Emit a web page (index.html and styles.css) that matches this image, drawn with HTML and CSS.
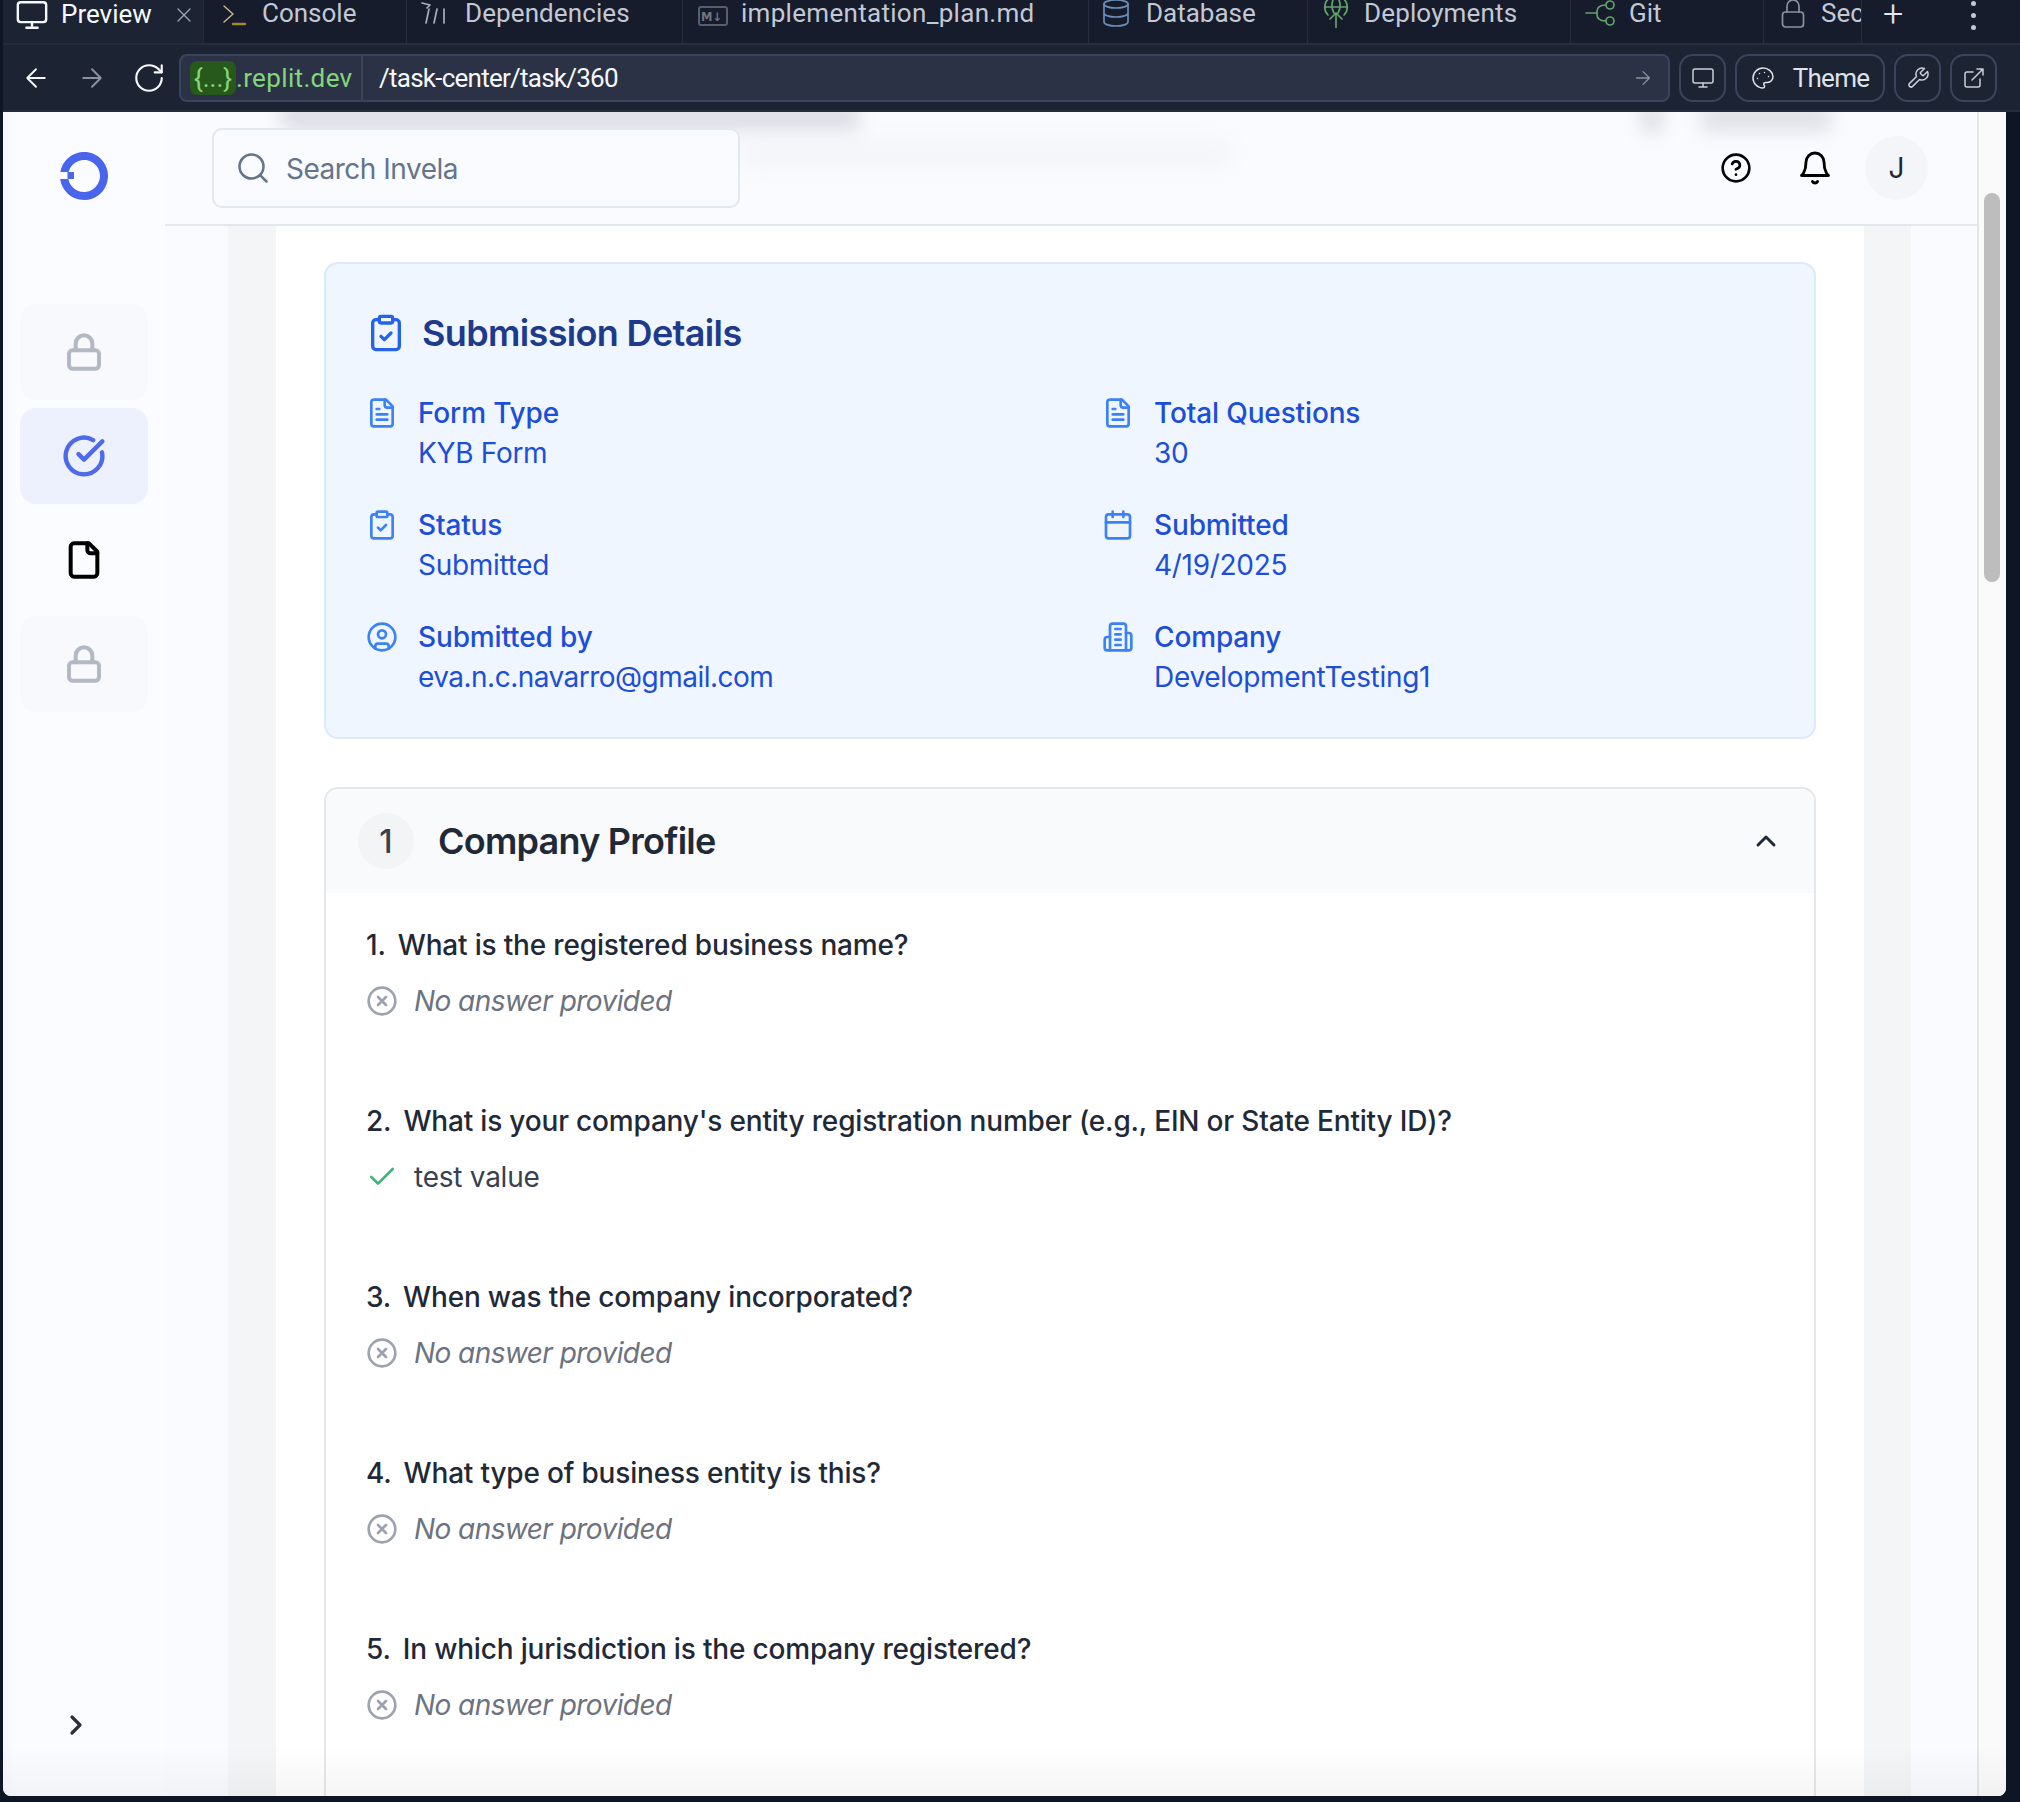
FILE: index.html
```html
<!DOCTYPE html>
<html lang="en">
<head>
<meta charset="utf-8">
<title>Replit preview</title>
<link rel="stylesheet" href="styles.css">
</head>
<body>
<svg class="defs" aria-hidden="true">
  <symbol id="i-monitor" viewBox="0 0 24 24"><rect x="2" y="3" width="20" height="14" rx="2"/><path d="M8 21h8M12 17v4"/></symbol>
  <symbol id="i-x" viewBox="0 0 24 24"><path d="M18 6 6 18M6 6l12 12"/></symbol>
  <symbol id="i-arrow-left" viewBox="0 0 24 24"><path d="m12 19-7-7 7-7M19 12H5"/></symbol>
  <symbol id="i-arrow-right" viewBox="0 0 24 24"><path d="M5 12h14M12 5l7 7-7 7"/></symbol>
  <symbol id="i-reload" viewBox="0 0 24 24"><path d="M21 12a9 9 0 1 1-9-9c2.520 0 4.930 1 6.740 2.740L21 8"/><path d="M21 3v5h-5"/></symbol>
  <symbol id="i-lock" viewBox="0 0 24 24"><rect x="3" y="11" width="18" height="11" rx="2"/><path d="M7 11V7a5 5 0 0 1 10 0v4"/></symbol>
  <symbol id="i-check-circle" viewBox="0 0 24 24"><path d="M21.801 10A10 10 0 1 1 17 3.335"/><path d="m9 11 3 3L22 4"/></symbol>
  <symbol id="i-file" viewBox="0 0 24 24"><path d="M15 2H6a2 2 0 0 0-2 2v16a2 2 0 0 0 2 2h12a2 2 0 0 0 2-2V7Z"/><path d="M14 2v4a2 2 0 0 0 2 2h4"/></symbol>
  <symbol id="i-file-text" viewBox="0 0 24 24"><path d="M15 2H6a2 2 0 0 0-2 2v16a2 2 0 0 0 2 2h12a2 2 0 0 0 2-2V7Z"/><path d="M14 2v4a2 2 0 0 0 2 2h4M10 9H8M16 13H8M16 17H8"/></symbol>
  <symbol id="i-clipboard" viewBox="0 0 24 24"><rect x="8" y="2" width="8" height="4" rx="1"/><path d="M16 4h2a2 2 0 0 1 2 2v14a2 2 0 0 1-2 2H6a2 2 0 0 1-2-2V6a2 2 0 0 1 2-2h2"/><path d="m9 14 2 2 4-4"/></symbol>
  <symbol id="i-calendar" viewBox="0 0 24 24"><path d="M8 2v4M16 2v4"/><rect x="3" y="4" width="18" height="18" rx="2"/><path d="M3 10h18"/></symbol>
  <symbol id="i-user" viewBox="0 0 24 24"><circle cx="12" cy="12" r="10"/><circle cx="12" cy="10" r="3"/><path d="M7 20.662V19a2 2 0 0 1 2-2h6a2 2 0 0 1 2 2v1.662"/></symbol>
  <symbol id="i-building" viewBox="0 0 24 24"><path d="M6 22V4a2 2 0 0 1 2-2h8a2 2 0 0 1 2 2v18Z"/><path d="M6 12H4a2 2 0 0 0-2 2v6a2 2 0 0 0 2 2h2M18 9h2a2 2 0 0 1 2 2v9a2 2 0 0 1-2 2h-2M10 6h4M10 10h4M10 14h4M10 18h4"/></symbol>
  <symbol id="i-circle-x" viewBox="0 0 24 24"><circle cx="12" cy="12" r="10"/><path d="m15 9-6 6M9 9l6 6"/></symbol>
</svg>

<div class="window">
  <nav class="tabbar">
    <div class="tab tab-preview is-active">
      <svg class="ico ico-tab ink-white"><use href="#i-monitor"/></svg><span class="tab-label">Preview</span>
      <svg class="ico ico-close"><use href="#i-x"/></svg>
    </div>
    <div class="tab tab-console">
      <svg class="ico-tab" viewBox="0 0 28 28"><path class="stroke-tan" d="M4 6l9 8-9 8"/><path class="stroke-olive" d="M13 24h12"/></svg><span class="tab-label">Console</span>
    </div>
    <div class="tab tab-deps">
      <svg class="ico ico-tab ink-deps" viewBox="-3 0 28 28"><path d="M-2 3l8 2-3 3"/><path d="M5 9 2 23M13 9l-3 14M20 9v14"/></svg><span class="tab-label">Dependencies</span>
    </div>
    <div class="tab tab-plan">
      <svg class="ico-tab ico-md" viewBox="0 0 30 20"><rect class="stroke-dim" x="1" y="1" width="28" height="18" rx="2"/><text class="md-mark" x="3" y="14.500">M↓</text></svg><span class="tab-label">implementation_plan.md</span>
    </div>
    <div class="tab tab-db">
      <svg class="ico ico-tab ink-blue"><ellipse cx="14" cy="4" rx="12" ry="4"/><path d="M2 4v18c0 2.200 5.400 4 12 4s12-1.800 12-4V4M2 13c0 2.200 5.400 4 12 4s12-1.800 12-4"/></svg><span class="tab-label">Database</span>
    </div>
    <div class="tab tab-deploy">
      <svg class="ico ico-tab ink-green" viewBox="0 0 24 28"><path d="M12 13v15M6 19l6-6 6 6M4 15A11.300 11.300 0 1 1 20 15M1 7h22M12-4c-5 4-5 12-2 17M12-4c5 4 5 12 2 17"/></svg><span class="tab-label">Deployments</span>
    </div>
    <div class="tab tab-git">
      <svg class="ico ico-tab ico-git ink-green" viewBox="0 0 30 28"><circle cx="25" cy="5" r="4"/><circle cx="25" cy="21" r="4"/><path d="M1 13h11M21 5h-1c-5 0-8 3-8 6v4c0 3 3 6 8 6h1"/></svg><span class="tab-label">Git</span>
    </div>
    <div class="tab tab-secrets">
      <svg class="ico ico-tab ink-grey" viewBox="0 0 24 28"><rect x="1.500" y="12" width="21" height="15" rx="3"/><path d="M6 12V6a6 6 0 0 1 12 0v6"/></svg><span class="tab-label">Sec</span>
    </div>
    <div class="tab-actions">
      <span class="tab-plus">+</span>
      <span class="tab-more"><i></i><i></i><i></i></span>
    </div>
  </nav>

  <div class="toolbar">
    <svg class="ico ico-nav ink-white"><use href="#i-arrow-left"/></svg>
    <svg class="ico ico-nav ink-dim"><use href="#i-arrow-right"/></svg>
    <svg class="ico ico-nav ico-reload ink-white"><use href="#i-reload"/></svg>
    <div class="urlbar">
      <div class="url-host"><span class="url-pill">{...}</span><span>.replit.dev</span></div>
      <div class="url-path">/task-center/task/360</div>
      <svg class="ico ico-go ink-dim"><use href="#i-arrow-right"/></svg>
    </div>
    <button class="tool-btn"><svg class="ico ico-btn"><use href="#i-monitor"/></svg></button>
    <button class="tool-btn tool-theme">
      <svg class="ico ico-btn" viewBox="0 0 24 24"><path d="M12 2C6.500 2 2 6.500 2 12s4.500 10 10 10c.926 0 1.648-.746 1.648-1.688 0-.437-.18-.835-.437-1.125-.29-.289-.438-.652-.438-1.125a1.640 1.640 0 0 1 1.668-1.668h1.996c3.051 0 5.555-2.503 5.555-5.554C21.965 6.012 17.461 2 12 2z"/><path d="M13.500 6.500h.01M17.500 10.500h.01M8.500 7.500h.01M6.500 12.500h.01"/></svg>
      <span>Theme</span>
    </button>
    <button class="tool-btn"><svg class="ico ico-btn" viewBox="0 0 24 24"><path d="M14.700 6.300a1 1 0 0 0 0 1.400l1.600 1.600a1 1 0 0 0 1.400 0l3.770-3.770a6 6 0 0 1-7.940 7.940l-6.910 6.910a2.120 2.120 0 0 1-3-3l6.910-6.910a6 6 0 0 1 7.940-7.940l-3.760 3.760z"/></svg></button>
    <button class="tool-btn"><svg class="ico ico-btn" viewBox="0 0 24 24"><path d="M15 3h6v6M10 14 21 3M18 13v6a2 2 0 0 1-2 2H5a2 2 0 0 1-2-2V8a2 2 0 0 1 2-2h6"/></svg></button>
  </div>

  <div class="viewport">
    <aside class="sidebar">
      <svg class="logo" viewBox="0 0 48 48"><path d="M.34 20A24 24 0 1 1 .2 27H8.300A16 16 0 1 0 8.500 20ZM7.500 20H14V27H7.500Z"/></svg>
      <ul class="side-nav">
        <li class="side-item is-locked"><svg class="ico side-ico ink-lock"><use href="#i-lock"/></svg></li>
        <li class="side-item is-current"><svg class="ico side-ico side-ico-lg ink-brand"><use href="#i-check-circle"/></svg></li>
        <li class="side-item"><svg class="ico side-ico ink-black"><use href="#i-file"/></svg></li>
        <li class="side-item is-locked"><svg class="ico side-ico ink-lock"><use href="#i-lock"/></svg></li>
      </ul>
      <svg class="ico side-toggle" viewBox="0 0 24 24"><path d="m9 18 6-6-6-6"/></svg>
    </aside>

    <div class="stage">
      <header class="topbar">
        <span class="ghost ghost-title"></span>
        <span class="ghost ghost-sub"></span>
        <span class="ghost ghost-icon"></span>
        <span class="ghost ghost-btn"></span>
        <div class="search">
          <svg class="ico search-ico" viewBox="0 0 24 24"><circle cx="11" cy="11" r="8"/><path d="m21 21-4.300-4.300"/></svg>
          <span class="search-text">Search Invela</span>
        </div>
        <div class="top-actions">
          <svg class="ico top-ico top-help" viewBox="0 0 24 24"><circle cx="12" cy="12" r="10"/><path d="M9.090 9a3 3 0 0 1 5.830 1c0 2-3 3-3 3M12 17h.01"/></svg>
          <svg class="ico top-ico" viewBox="0 0 24 24"><path d="M6 8a6 6 0 0 1 12 0c0 7 3 9 3 9H3s3-2 3-9M10.300 21a1.940 1.940 0 0 0 3.400 0"/></svg>
          <div class="avatar">J</div>
        </div>
      </header>

      <main class="page">
        <div class="page-shell">
          <div class="sheet">
            <section class="details">
              <h2 class="details-title"><svg class="ico details-ico"><use href="#i-clipboard"/></svg>Submission Details</h2>
              <div class="details-grid">
                <div class="fact"><svg class="ico fact-ico"><use href="#i-file-text"/></svg><div><div class="fact-label">Form Type</div><div class="fact-value">KYB Form</div></div></div>
                <div class="fact"><svg class="ico fact-ico"><use href="#i-file-text"/></svg><div><div class="fact-label">Total Questions</div><div class="fact-value">30</div></div></div>
                <div class="fact"><svg class="ico fact-ico"><use href="#i-clipboard"/></svg><div><div class="fact-label">Status</div><div class="fact-value">Submitted</div></div></div>
                <div class="fact"><svg class="ico fact-ico"><use href="#i-calendar"/></svg><div><div class="fact-label">Submitted</div><div class="fact-value">4/19/2025</div></div></div>
                <div class="fact"><svg class="ico fact-ico"><use href="#i-user"/></svg><div><div class="fact-label">Submitted by</div><div class="fact-value fact-email">eva.n.c.navarro@gmail.com</div></div></div>
                <div class="fact"><svg class="ico fact-ico"><use href="#i-building"/></svg><div><div class="fact-label">Company</div><div class="fact-value">DevelopmentTesting1</div></div></div>
              </div>
            </section>

            <section class="group">
              <div class="group-head">
                <span class="group-num">1</span>
                <h3 class="group-title">Company Profile</h3>
                <svg class="ico group-chevron" viewBox="0 0 24 24"><path d="m18 15-6-6-6 6"/></svg>
              </div>
              <div class="group-body">
                <div class="qa">
                  <div class="q"><span>1.</span><span>What is the registered business name?</span></div>
                  <div class="a a-empty"><svg class="ico a-ico"><use href="#i-circle-x"/></svg>No answer provided</div>
                </div>
                <div class="qa">
                  <div class="q"><span>2.</span><span>What is your company's entity registration number (e.g., EIN or State Entity ID)?</span></div>
                  <div class="a"><svg class="ico a-ico a-ok" viewBox="0 0 24 24"><path d="M20 6 9 17l-5-5"/></svg>test value</div>
                </div>
                <div class="qa">
                  <div class="q"><span>3.</span><span>When was the company incorporated?</span></div>
                  <div class="a a-empty"><svg class="ico a-ico"><use href="#i-circle-x"/></svg>No answer provided</div>
                </div>
                <div class="qa">
                  <div class="q"><span>4.</span><span>What type of business entity is this?</span></div>
                  <div class="a a-empty"><svg class="ico a-ico"><use href="#i-circle-x"/></svg>No answer provided</div>
                </div>
                <div class="qa">
                  <div class="q"><span>5.</span><span>In which jurisdiction is the company registered?</span></div>
                  <div class="a a-empty"><svg class="ico a-ico"><use href="#i-circle-x"/></svg>No answer provided</div>
                </div>
              </div>
            </section>
          </div>
        </div>
      </main>
    </div>

    <div class="scrolltrack"><div class="scrollthumb"></div></div>
    <div class="bottom-fade"></div>
  </div>
</div>
</body>
</html>
```

FILE: styles.css
```css
* { box-sizing: border-box; }
html, body { margin: 0; height: 100%; }
body {
  background: #0e1525;
  font-family: Inter, "Liberation Sans", sans-serif;
  overflow: hidden;
}
.defs { display: none; }
.ico {
  fill: none;
  stroke: currentColor;
  stroke-width: 2;
  stroke-linecap: round;
  stroke-linejoin: round;
  flex: none;
}
ul { list-style: none; margin: 0; padding: 0; }
h2, h3 { margin: 0; }

.window {
  height: 1802px;
  padding: 0 14px 6px 3px;
  display: flex;
  flex-direction: column;
}

/* Tabs */
.tabbar {
  height: 45px;
  flex: none;
  display: flex;
  margin-right: -14px;
  background: #161c2c;
  border-bottom: 2px solid #262d3f;
  font-family: Roboto, sans-serif;
  font-size: 26px;
  color: #c2c8d4;
  overflow: hidden;
}
.tab {
  flex: none;
  height: 44px;
  display: flex;
  align-items: center;
  padding: 0 0 16px 16px;
  border-right: 1px solid #262d3f;
  gap: 16px;
  white-space: nowrap;
  overflow: hidden;
}
.tab-label { line-height: 26px; margin-bottom: 2px; }
.ico-tab { width: 28px; height: 28px; flex: none; stroke-width: 1.700; }
.tab-preview { width: 201px; padding-left: 12px; background: #1c2333; color: #f5f9fc; margin-bottom: -2px; height: 45px; }
.tab-preview .ico-tab { width: 34px; height: 34px; stroke-width: 1.700; }
.tab-preview .tab-label { margin-left: -4px; }
.ico-close { width: 24px; height: 24px; color: #9da2ad; margin-left: 4px; margin-right: 0; stroke-width: 1.400; }
.tab-console { width: 203px; gap: 14px; }
.tab-deps { width: 276px; padding-left: 14px; }
.tab-deps .tab-label { letter-spacing: .1px; }
.tab-plan { width: 406px; padding-left: 15px; gap: 13px; }
.tab-plan .tab-label { letter-spacing: .3px; }
.tab-db { width: 219px; padding-left: 13px; }
.tab-deploy { width: 263px; padding-left: 14px; gap: 14px; }
.tab-deploy .tab-label { letter-spacing: .15px; }
.tab-git { width: 193px; padding-left: 14px; gap: 14px; }
.ico-git { width: 30px; }
.tab-secrets { width: 98px; padding-left: 17px; gap: 16px; }
.tab-secrets .ico-tab { width: 24px; }
.ico-md { width: 30px; height: 20px; margin-top: 4px; }
.stroke-tan, .stroke-olive, .stroke-dim { fill: none; stroke-width: 1.500; stroke-linecap: round; stroke-linejoin: round; }
.stroke-tan { stroke: #c9b58a; }
.stroke-olive { stroke: #a1882f; stroke-width: 2.500; }
.stroke-dim { stroke: #575e6e; stroke-width: 2; }
.md-mark { fill: #6f7584; font-size: 11.500px; font-weight: 700; font-family: "DejaVu Sans", sans-serif; }
.ink-white { color: #f5f9fc; }
.ink-blue { color: #6d8db8; }
.ink-green { color: #62a368; }
.ink-grey { color: #8b91a0; }
.ink-deps { color: #a9aeb9; }
.ink-dim { color: #8d929e; }
.ink-lock { color: #b2b9c5; }
.ink-brand { color: #4f6ae8; }
.ink-black { color: #000; }
.tab-actions {
  flex: 1;
  height: 44px;
  display: flex;
  align-items: center;
  padding-bottom: 16px;
  padding-left: 21px;
  gap: 68px;
}
.tab-plus { font-size: 36px; font-weight: 300; color: #e4e7ec; line-height: 28px; }
.tab-more { display: flex; flex-direction: column; gap: 7px; margin-top: 2px; }
.tab-more i { width: 5px; height: 5px; border-radius: 50%; background: #c2c8d4; }

/* Toolbar */
.toolbar {
  height: 67px;
  flex: none;
  display: flex;
  align-items: center;
  margin-right: -14px;
  padding: 0 23px 0 18px;
  background: #1c2333;
  border-bottom: 2px solid #262d3f;
  font-family: Roboto, sans-serif;
  font-size: 26px;
}
.ico-nav { width: 30px; height: 30px; margin-right: 26px; stroke-width: 1.500; }
.ico-reload { width: 34px; height: 34px; margin-right: 13px; margin-left: -1px; }
.urlbar {
  flex: 1;
  height: 48px;
  display: flex;
  align-items: center;
  background: #2b3245;
  border: 2px solid #3c445c;
  border-radius: 8px;
  overflow: hidden;
}
.url-host {
  width: 182px;
  height: 100%;
  display: flex;
  align-items: center;
  padding-left: 9px;
  border-right: 2px solid #3c445c;
  color: #84d67c;
  letter-spacing: .35px;
  flex: none;
}
.url-pill {
  height: 34px;
  width: 46px;
  background: #27591c;
  border-radius: 7px;
  text-align: center;
  line-height: 34px;
  letter-spacing: 0;
}
.url-path { flex: 1; padding-left: 16px; color: #f5f9fc; letter-spacing: -.75px; }
.ico-go { width: 22px; height: 22px; margin-right: 14px; stroke-width: 1.400; }
.tool-btn {
  height: 48px;
  width: 47px;
  flex: none;
  margin-left: 9px;
  padding: 0;
  display: flex;
  align-items: center;
  justify-content: center;
  background: transparent;
  border: 2px solid #3c445c;
  border-radius: 14px;
  color: #c9ced8;
  font: inherit;
}
.tool-theme { width: 150px; gap: 18px; color: #dfe3ea; letter-spacing: -.7px; }
.ico-btn { width: 24px; height: 24px; stroke-width: 1.500; }

/* Viewport */
.viewport {
  flex: 1;
  min-height: 0;
  display: flex;
  position: relative;
  background: #fafbff;
  border-radius: 0 0 8px 8px;
  overflow: hidden;
}
.sidebar {
  width: 162px;
  flex: none;
  display: flex;
  flex-direction: column;
  padding: 40px 17px 0;
  background: linear-gradient(90deg, #f6f8fc 0, #fbfcff 12px);
}
.logo { width: 48px; height: 48px; margin-left: 40px; fill: #4965ec; }
.side-nav { display: flex; flex-direction: column; gap: 8px; margin-top: 104px; }
.side-item {
  height: 96px;
  width: 128px;
  border-radius: 16px;
  display: flex;
  align-items: center;
  justify-content: center;
}
.is-locked { background: #f8f9fc; }
.is-current { background: #edf1fe; }
.side-ico { width: 40px; height: 40px; stroke-width: 2.400; }
.side-ico-lg { width: 44px; height: 44px; }
.side-toggle { width: 32px; height: 32px; color: #2a2f3a; margin: auto 0 55px 40px; stroke-width: 2.400; }

.stage {
  flex: 1;
  min-width: 0;
  position: relative;
}
.topbar {
  position: absolute;
  inset: 0 0 auto 0;
  height: 114px;
  z-index: 2;
  display: flex;
  align-items: center;
  justify-content: space-between;
  padding: 0 49px 0 47px;
  background: #fafbff;
  border-bottom: 2px solid #e3e8ef;
  overflow: hidden;
}
.ghost {
  position: absolute;
  background: #9aa0ad;
  filter: blur(9px);
  opacity: .32;
}
.ghost-title { left: 115px; top: -8px; width: 580px; height: 26px; }
.ghost-sub { left: 575px; top: 28px; width: 490px; height: 26px; opacity: .07; filter: blur(11px); }
.ghost-icon { left: 1476px; top: -8px; width: 22px; height: 28px; }
.ghost-btn { left: 1536px; top: -8px; width: 130px; height: 28px; opacity: .28; }
.search {
  position: relative;
  width: 528px;
  height: 80px;
  display: flex;
  align-items: center;
  gap: 15px;
  padding-left: 21px;
  background: #fafbff;
  border: 2px solid #e2e8f0;
  border-radius: 10px;
  font-size: 28px;
  letter-spacing: -.5px;
  color: #64748b;
}
.search-text { margin-top: 2px; }
.search-ico { width: 36px; height: 36px; stroke-width: 1.700; }
.top-actions { position: relative; display: flex; align-items: center; gap: 45px; color: #000; }
.top-ico { width: 36px; height: 36px; stroke-width: 1.900; }
.top-help { width: 32px; height: 32px; stroke-width: 2; }
.avatar {
  width: 63px;
  height: 64px;
  margin-left: -13px;
  border-radius: 50%;
  background: #f3f5f9;
  display: flex;
  align-items: center;
  justify-content: center;
  font-size: 28px;
  color: #1f2937;
}

.page { height: 100%; padding: 0 66px 0 63px; overflow: hidden; }
.page-shell { height: 100%; padding: 0 47px 0 48px; background: #f4f5f7; }
.sheet { height: 100%; padding: 150px 48px 0 48px; background: #fff; overflow: hidden; }

.details {
  padding: 41px 40px 40px;
  background: #eff6ff;
  border: 2px solid #dbeafe;
  border-radius: 14px;
}
.details-title {
  display: flex;
  align-items: center;
  gap: 16px;
  height: 56px;
  font-size: 36px;
  font-weight: 600;
  letter-spacing: -.65px;
  color: #1e3a8a;
}
.details-ico { width: 40px; height: 40px; color: #2563eb; }
.details-grid {
  display: grid;
  grid-template-columns: 736px 1fr;
  row-gap: 32px;
  margin-top: 32px;
}
.fact { display: flex; gap: 20px; font-size: 28px; line-height: 40px; color: #1d4ed8; }
.fact-ico { width: 32px; height: 32px; margin-top: 4px; color: #3b82f6; }
.fact-label { font-weight: 500; letter-spacing: -.14px; }
.fact-value { letter-spacing: -.3px; }
.fact-email { letter-spacing: -.52px; }

.group {
  margin-top: 48px;
  border: 2px solid #e5e7eb;
  border-bottom: 0;
  border-radius: 14px 14px 0 0;
  overflow: hidden;
}
.group-head {
  height: 104px;
  display: flex;
  align-items: center;
  padding: 0 32px;
  background: #f9fafb;
}
.group-num {
  width: 56px;
  height: 56px;
  border-radius: 50%;
  background: #f3f4f6;
  display: flex;
  align-items: center;
  justify-content: center;
  font-size: 32px;
  font-weight: 500;
  color: #374151;
}
.group-title { flex: 1; margin-left: 24px; font-size: 36px; font-weight: 600; letter-spacing: -.77px; color: #1f2937; }
.group-chevron { width: 32px; height: 32px; color: #1f2937; stroke-width: 2.200; }
.group-body { padding: 32px 40px 0; }
.qa { margin-bottom: 80px; }
.q {
  display: flex;
  gap: 12px;
  font-size: 28px;
  line-height: 40px;
  font-weight: 500;
  letter-spacing: -.18px;
  color: #1f2937;
}
.a {
  display: flex;
  align-items: center;
  gap: 16px;
  margin-top: 16px;
  font-size: 28px;
  line-height: 40px;
  letter-spacing: -.25px;
  color: #374151;
}
.a-empty { color: #6b7280; font-style: italic; letter-spacing: -.56px; }
.a-ico { width: 32px; height: 32px; color: #9ca3af; }
.a-ok { color: #3fb57c; }

.scrolltrack {
  width: 29px;
  flex: none;
  position: relative;
  background: #fafafa;
  border-left: 2px solid #e4e6ea;
}
.scrollthumb {
  position: absolute;
  top: 81px;
  left: 5px;
  width: 16px;
  height: 389px;
  border-radius: 8px;
  background: #bdbdbd;
}
.bottom-fade {
  position: absolute;
  inset: auto 0 0 0;
  height: 50px;
  background: linear-gradient(180deg, rgba(0,0,0,0), rgba(0,0,0,.035));
  pointer-events: none;
  z-index: 3;
}
```
